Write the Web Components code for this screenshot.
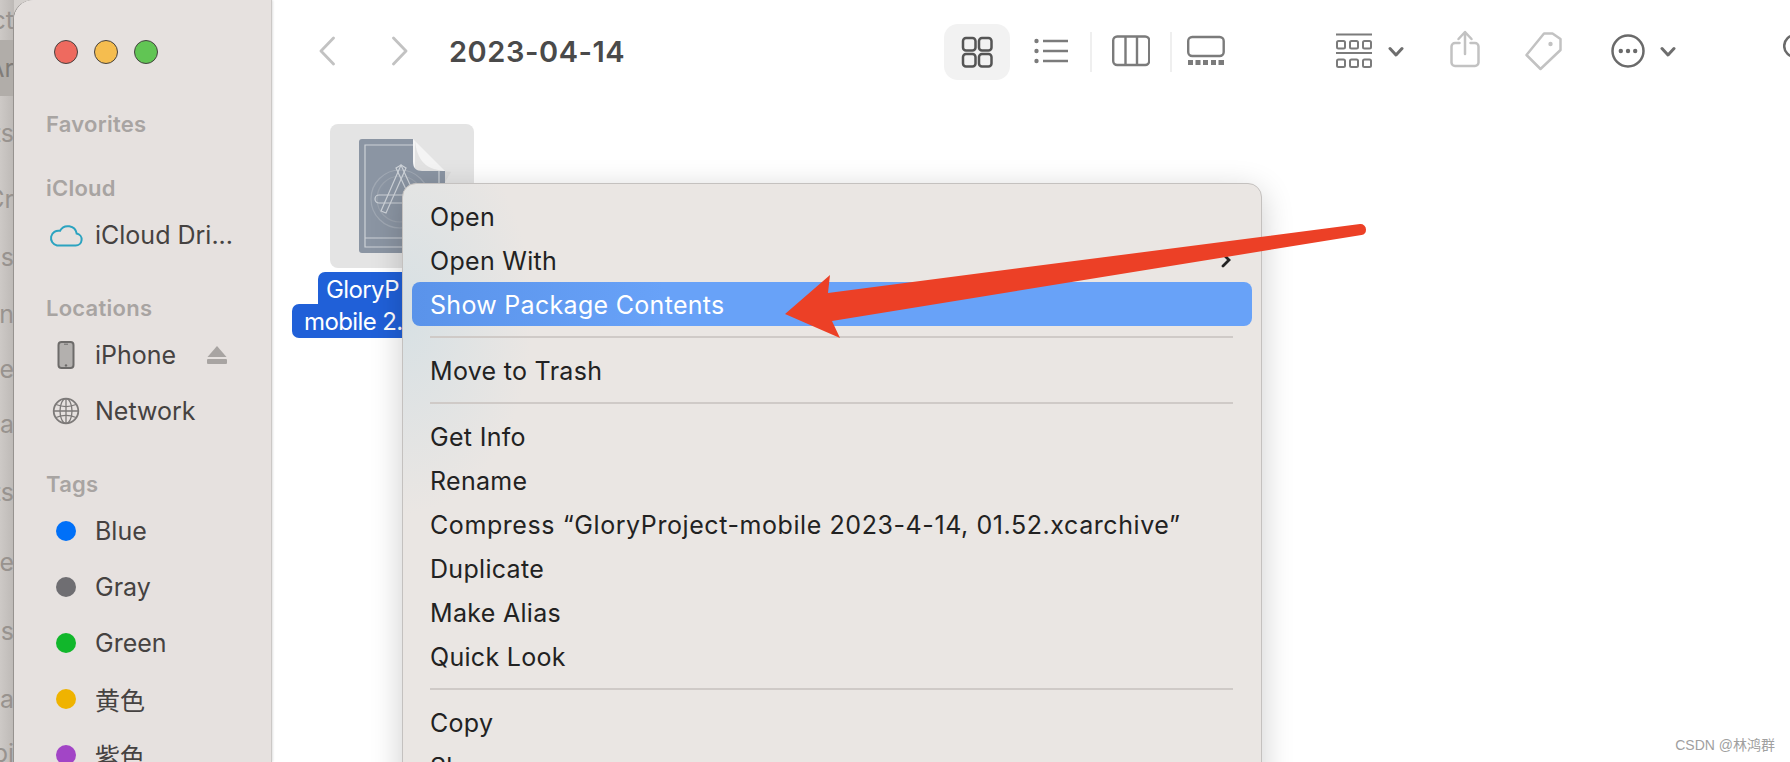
<!DOCTYPE html>
<html>
<head>
<meta charset="utf-8">
<title>Finder</title>
<style>
  html, body { margin: 0; height: 762px; overflow: hidden; }
  body { font-family: Inter, "Noto Sans CJK SC", sans-serif; background: #d4d0cd; }
</style>
</head>
<body>
<finder-desktop>
  <back-strip>
    <strip-word h="40">ct</strip-word>
    <strip-word h="56" on>Ar</strip-word>
    <strip-word h="74">ts</strip-word>
    <strip-word h="58">Cr</strip-word>
    <strip-word h="58">Dis</strip-word>
    <strip-word h="56">n</strip-word>
    <strip-word h="54">e</strip-word>
    <strip-word h="56">la</strip-word>
    <strip-word h="80">ts</strip-word>
    <strip-word h="60">Re</strip-word>
    <strip-word h="78">cs</strip-word>
    <strip-word h="58">Sa</strip-word>
    <strip-word h="50">bi</strip-word>
  </back-strip>
  <finder-window>
    <finder-sidebar slot="side">
      <side-head first>Favorites</side-head>
      <side-head>iCloud</side-head>
      <side-item>
        <svg slot="icon" width="34" height="24" viewBox="0 0 34 24"><path d="M8 22.500h18.500a6 6 0 0 0 1.200-11.900A9 9 0 0 0 11 7.800 7.500 7.500 0 0 0 8 22.500z" fill="none" stroke="#2ba3c0" stroke-width="2"/></svg>
        iCloud Dri...
      </side-item>
      <side-head>Locations</side-head>
      <side-item>
        <svg slot="icon" width="18" height="28" viewBox="0 0 18 28"><rect x="1.500" y="1" width="15" height="26" rx="3" fill="#b3b0ae" stroke="#6d6b6a" stroke-width="2"/><circle cx="9" cy="24.400" r="1.200" fill="#6d6b6a"/><path d="M7 3.200h4" stroke="#6d6b6a" stroke-width="1"/></svg>
        iPhone
        <svg slot="end" width="20" height="18" viewBox="0 0 20 18"><path d="M10 0 19.500 11H.5z" fill="#a8a4a2"/><rect y="13" width="20" height="5" rx="1" fill="#a8a4a2"/></svg>
      </side-item>
      <side-item>
        <svg slot="icon" width="28" height="28" viewBox="0 0 28 28" fill="none" stroke="#7d7a79" stroke-width="1.300"><circle cx="14" cy="14" r="12.300" stroke-width="1.800"/><path d="M2 14h24M4 7.500c6 2.500 14 2.500 20 0M4 20.500c6-2.500 14-2.500 20 0"/><ellipse cx="14" cy="14" rx="6" ry="12.300"/><path d="M14 2v24"/></svg>
        Network
      </side-item>
      <side-head>Tags</side-head>
      <side-item><tag-dot slot="icon" color="#0070f8"></tag-dot>Blue</side-item>
      <side-item><tag-dot slot="icon" color="#6f6e72"></tag-dot>Gray</side-item>
      <side-item><tag-dot slot="icon" color="#11b72b"></tag-dot>Green</side-item>
      <side-item><tag-dot slot="icon" color="#efb300"></tag-dot>黄色</side-item>
      <side-item><tag-dot slot="icon" color="#a245c6"></tag-dot>紫色</side-item>
    </finder-sidebar>

    <finder-toolbar slot="bar">
      <svg style="margin-left:47px" width="16" height="44" viewBox="0 30 16 44" fill="none" stroke="#c2c2c2" stroke-width="2.800" stroke-linecap="round" stroke-linejoin="round"><path d="M14.500 38 2 51l12.500 13"/></svg>
      <svg style="margin-left:57px" width="16" height="44" viewBox="0 30 16 44" fill="none" stroke="#c2c2c2" stroke-width="2.800" stroke-linecap="round" stroke-linejoin="round"><path d="M1.500 38 14 51 1.500 64"/></svg>
      <folder-title style="margin-left:41px">2023-04-14</folder-title>
      <view-selected style="margin-left:321px">
        <svg width="32" height="32" viewBox="0 0 32 32" fill="none" stroke="#555" stroke-width="2.500"><rect x="2" y="2" width="12.500" height="12.500" rx="3"/><rect x="18" y="2" width="12.500" height="12.500" rx="3"/><rect x="2" y="18" width="12.500" height="12.500" rx="3"/><rect x="18" y="18" width="12.500" height="12.500" rx="3"/></svg>
      </view-selected>
      <svg style="margin-left:24px" width="34" height="44" viewBox="0 30 34 44" fill="none" stroke="#7b7b7b" stroke-width="2.400"><circle cx="2.500" cy="41" r="2.200" fill="#7b7b7b" stroke="none"/><circle cx="2.500" cy="51" r="2.200" fill="#7b7b7b" stroke="none"/><circle cx="2.500" cy="61" r="2.200" fill="#7b7b7b" stroke="none"/><path d="M9 41h25M9 51h25M9 61h25"/></svg>
      <tool-sep style="margin-left:22px"></tool-sep>
      <svg style="margin-left:20px" width="38" height="44" viewBox="0 30 38 44" fill="none" stroke="#7b7b7b" stroke-width="2.400"><rect x="1.200" y="36.500" width="36" height="28.500" rx="4"/><path d="M13.500 36.500v28.500M25 36.500v28.500"/></svg>
      <tool-sep style="margin-left:20px"></tool-sep>
      <svg style="margin-left:15px" width="38" height="44" viewBox="0 30 38 44" fill="none" stroke="#7b7b7b" stroke-width="2.400"><rect x="1.200" y="37" width="35.500" height="19" rx="4"/><g fill="#7b7b7b" stroke="none"><rect x="1" y="60" width="5" height="5"/><rect x="8.500" y="60" width="5" height="5"/><rect x="16" y="60" width="5" height="5"/><rect x="24" y="60" width="5" height="5"/><rect x="31.500" y="60" width="5.500" height="5"/></g></svg>
      <svg style="margin-left:111px" width="36" height="44" viewBox="0 30 36 44" fill="none" stroke="#7b7b7b" stroke-width="2"><path d="M0 34.500h36M0 53h36"/><rect x="1" y="41" width="8" height="7.500" rx="1.500"/><rect x="14" y="41" width="8" height="7.500" rx="1.500"/><rect x="27" y="41" width="8" height="7.500" rx="1.500"/><rect x="1" y="59.500" width="8" height="7.500" rx="1.500"/><rect x="14" y="59.500" width="8" height="7.500" rx="1.500"/><rect x="27" y="59.500" width="8" height="7.500" rx="1.500"/></svg>
      <svg style="margin-left:16px" width="16" height="44" viewBox="0 30 16 44" fill="none" stroke="#6e6e6e" stroke-width="3" stroke-linecap="round" stroke-linejoin="round"><path d="m2 48.500 6 6.500 6-6.500"/></svg>
      <svg style="margin-left:46px" width="30" height="44" viewBox="0 30 30 44" fill="none" stroke="#c2c2c2" stroke-width="2.500" stroke-linecap="round" stroke-linejoin="round"><path d="M9.500 43H5a3.500 3.500 0 0 0-3.500 3.500v16A3.500 3.500 0 0 0 5 66h20a3.500 3.500 0 0 0 3.500-3.500v-16A3.500 3.500 0 0 0 25 43h-4.500M15 54V32.500M8.500 39 15 32l6.500 7"/></svg>
      <svg style="margin-left:45px" width="38" height="44" viewBox="0 30 38 44" fill="none" stroke="#c2c2c2" stroke-width="2.500" stroke-linejoin="round"><path d="M19 33.500h8.500l8 5.500v11L15.500 69 1.500 55z"/><circle cx="25.500" cy="44" r="2.200" fill="#c2c2c2" stroke="none"/></svg>
      <svg style="margin-left:48px" width="34" height="44" viewBox="0 30 34 44" fill="none" stroke="#6a6a6a" stroke-width="2.500"><circle cx="17" cy="51" r="15.500"/><g fill="#6a6a6a" stroke="none"><circle cx="9.800" cy="51" r="2.200"/><circle cx="17" cy="51" r="2.200"/><circle cx="24.200" cy="51" r="2.200"/></g></svg>
      <svg style="margin-left:15px" width="16" height="44" viewBox="0 30 16 44" fill="none" stroke="#6e6e6e" stroke-width="3" stroke-linecap="round" stroke-linejoin="round"><path d="m2 48.500 6 6.500 6-6.500"/></svg>
      <svg style="margin-left:107px" width="30" height="44" viewBox="0 30 30 44" fill="none" stroke="#6a6a6a" stroke-width="2.500"><circle cx="12" cy="46" r="10.800"/></svg>
    </finder-toolbar>

    <file-tile slot="files">
      <span slot="first">GloryP</span>
      <span slot="second">mobile 2.</span>
    </file-tile>
  </finder-window>

  <context-menu>
    <menu-row>Open</menu-row>
    <menu-row more>Open With</menu-row>
    <menu-row on>Show Package Contents</menu-row>
    <menu-sep></menu-sep>
    <menu-row>Move to Trash</menu-row>
    <menu-sep></menu-sep>
    <menu-row>Get Info</menu-row>
    <menu-row>Rename</menu-row>
    <menu-row style="letter-spacing:.58px">Compress “GloryProject-mobile 2023-4-14, 01.52.xcarchive”</menu-row>
    <menu-row>Duplicate</menu-row>
    <menu-row>Make Alias</menu-row>
    <menu-row>Quick Look</menu-row>
    <menu-sep></menu-sep>
    <menu-row>Copy</menu-row>
    <menu-row>Show</menu-row>
  </context-menu>

  <red-arrow></red-arrow>
  <water-mark>CSDN @林鸿群</water-mark>
</finder-desktop>

<script>
// every element here is only markup + style, so one small helper covers them
function define(name, css, html) {
  customElements.define(name, class extends HTMLElement {
    constructor() {
      super();
      this.shadow = this.attachShadow({ mode: "open" });
      this.shadow.innerHTML = `<style>${css}</style>${html}`;
    }
  });
}

define("finder-desktop", `
  :host { display: flex; position: relative; width: 1790px; height: 762px; overflow: hidden; }
`, `<slot></slot>`);

define("back-strip", `
  :host {
    display: flex; flex-direction: column; flex: none; width: 14px; height: 762px; overflow: hidden;
    background: linear-gradient(90deg, #cdc9c6, #bdb9b6);
    color: #98938f; font-size: 25px;
  }
`, `<slot></slot>`);

customElements.define("strip-word", class extends HTMLElement {
  constructor() {
    super();
    this.shadow = this.attachShadow({ mode: "open" });
    this.shadow.innerHTML = `<style>
      :host { display: flex; justify-content: flex-end; align-items: center; flex: none; white-space: nowrap; }
      :host([on]) { background: #b1ada9; color: #807c78; }
    </style><slot></slot>`;
  }
  connectedCallback() {
    this.style.height = this.getAttribute("h") + "px";
  }
});

define("finder-window", `
  :host {
    display: flex; flex: 1; min-width: 0; height: 762px; background: #fff; overflow: hidden;
    border-top-left-radius: 20px;
    box-shadow: -1px 0 0 #96928f;
  }
  .main { display: flex; flex-direction: column; flex: 1; min-width: 0; }
`, `
  <slot name="side"></slot>
  <div class="main">
    <slot name="bar"></slot>
    <slot name="files"></slot>
  </div>
`);

define("finder-sidebar", `
  :host {
    display: block; flex: none; box-sizing: border-box; width: 258px; height: 762px;
    background: #e6e1df; padding: 40px 0 0 33px;
    border-right: 1px solid #cbc8c6;
    box-shadow: 1px 0 2px rgba(0, 0, 0, .12);
    color: #454241; overflow: hidden;
  }
  .lights { display: flex; gap: 16px; margin: 0 0 41px 7px; }
  .lights i { width: 22px; height: 22px; border-radius: 50%; border: 1px solid; }
  .r { background: #ee6a5f; border-color: #d5544a; }
  .y { background: #f5bd4f; border-color: #d69e34; }
  .g { background: #61c554; border-color: #4aa63e; }
`, `
  <div class="lights"><i class="r"></i><i class="y"></i><i class="g"></i></div>
  <slot></slot>
`);

define("side-head", `
  :host { display: flex; align-items: center; height: 38px; margin-top: 26px; margin-left: -1px; font-size: 22px; font-weight: 600; letter-spacing: .25px; color: #a8a4a2; }
  :host([first]) { margin-top: 0; }
`, `<slot></slot>`);

define("side-item", `
  :host { display: flex; align-items: center; height: 56px; font-size: 25px; padding-right: 44px; white-space: nowrap; }
  .icon { display: flex; justify-content: center; align-items: center; flex: none; width: 38px; margin-right: 10px; }
  .end { display: flex; margin-left: auto; }
`, `
  <span class="icon"><slot name="icon"></slot></span>
  <slot></slot>
  <span class="end"><slot name="end"></slot></span>
`);

customElements.define("tag-dot", class extends HTMLElement {
  constructor() {
    super();
    this.shadow = this.attachShadow({ mode: "open" });
    this.shadow.innerHTML = `<style>:host { display: block; width: 20px; height: 20px; border-radius: 50%; }</style>`;
  }
  connectedCallback() {
    this.style.background = this.getAttribute("color");
  }
});

define("finder-toolbar", `
  :host { display: flex; align-items: center; flex: none; height: 104px; overflow: hidden; }
  ::slotted(*) { flex: none; }
`, `<slot></slot>`);

define("folder-title", `
  :host { display: block; box-sizing: border-box; width: 174px; height: 36px; line-height: 36px; margin-left: -2px; font-size: 29px; font-weight: 600; letter-spacing: .55px; color: #4a4a4a; white-space: nowrap; }
`, `<slot></slot>`);

define("view-selected", `
  :host { display: flex; align-items: center; justify-content: center; width: 66px; height: 56px; border-radius: 14px; background: #f2f2f2; }
`, `<slot></slot>`);

define("tool-sep", `
  :host { display: block; width: 2px; height: 40px; background: #efefef; }
`, ``);

define("file-tile", `
  :host { display: flex; flex-direction: column; align-items: center; width: 220px; padding: 20px 0 0 20px; color: #fff; font-size: 24px; letter-spacing: -.6px; }
  .tile { width: 144px; height: 144px; border-radius: 8px; background: #e4e4e4; margin-bottom: 4px; }
  .tile svg { display: block; }
  .line { box-sizing: border-box; height: 32px; line-height: 36px; background: #2060d8; white-space: nowrap; }
  .one { width: 168px; padding-left: 8px; border-radius: 7px 7px 0 0; }
  .two { width: 220px; height: 34px; line-height: 36px; padding-left: 12px; border-radius: 7px; border-top-right-radius: 0; }
`, `
  <div class="tile">
    <svg width="144" height="144" viewBox="0 0 144 144" fill="none">
      <path d="M83 15 115 47 H92 C86 47 83 44 83 38z" fill="#f4f4f4"/>
      <path d="M85 17 C88 42 100 46 121 48 L115 58 L85 58z" fill="#cfcfcf" opacity=".5"/>
      <path d="M32 15H83V38C83 44 86 47 92 47H115V126a3 3 0 0 1-3 3H32a3 3 0 0 1-3-3V18a3 3 0 0 1 3-3z" fill="#8b95a3"/>
      <g stroke="#cdd2d8" stroke-width="1.200">
        <path d="M83 21H35V123H109V47"/>
        <path d="M35 114H109"/>
        <circle cx="70" cy="75" r="29" stroke="#a0a8b3"/>
        <circle cx="70" cy="75" r="23" stroke="#9aa2ad"/>
        <path d="M71 41 76 44 56 89 51 87z"/>
        <path d="M66 44 71 41 92 87 87 89z"/>
        <rect x="45" y="71" width="52" height="8" rx="4"/>
      </g>
    </svg>
  </div>
  <div class="line one"><slot name="first"></slot></div>
  <div class="line two"><slot name="second"></slot></div>
`);

define("context-menu", `
  :host {
    display: block; position: absolute; left: 402px; top: 183px; width: 860px; height: 640px;
    box-sizing: border-box; padding-top: 10px;
    background:
      radial-gradient(ellipse 130px 200px at 0 130px, rgba(214, 224, 228, .95), rgba(214, 224, 228, 0)),
      #eae6e3;
    border: 1px solid #c4c1bf; border-radius: 14px;
    box-shadow: 0 8px 32px rgba(0, 0, 0, .2);
    color: #222; font-size: 25px; letter-spacing: .3px;
  }
`, `<slot></slot>`);

define("menu-row", `
  :host {
    display: flex; align-items: center; justify-content: space-between; box-sizing: border-box;
    height: 44px; margin: 0 9px; padding: 2px 20px 0 18px; border-radius: 8px; white-space: nowrap;
  }
  :host([on]) { background: linear-gradient(90deg, #5a93ea, #68a2f8 30%); color: #fff; }
  svg { display: none; }
  :host([more]) svg { display: block; margin-top: -2px; }
`, `
  <slot></slot>
  <svg width="12" height="16" viewBox="0 0 12 16" fill="none" stroke="#222" stroke-width="2.800" stroke-linecap="round"><path d="m3 2 6 6-6 6"/></svg>
`);

define("menu-sep", `
  :host { display: flex; align-items: center; height: 22px; margin: 0 28px 0 27px; }
  i { display: block; width: 100%; height: 2px; background: #cfcac7; }
`, `<i></i>`);

define("red-arrow", `
  :host { display: block; position: absolute; left: 0; top: 0; pointer-events: none; }
  svg { display: block; }
`, `
  <svg width="1790" height="762" viewBox="0 0 1790 762">
    <path d="M785 314 830 275 828 293 1360 224a5.500 5.500 0 0 1 6 5.500 5.500 5.500 0 0 1-4.500 5.500L832 321 840 338z" fill="#ec4026"/>
  </svg>
`);

define("water-mark", `
  :host { display: block; position: absolute; right: 15px; top: 736px; font: 14px/18px "Liberation Sans", "Noto Sans CJK SC", sans-serif; color: #a0a0a0; white-space: nowrap; }
`, `<slot></slot>`);
</script>
</body>
</html>
